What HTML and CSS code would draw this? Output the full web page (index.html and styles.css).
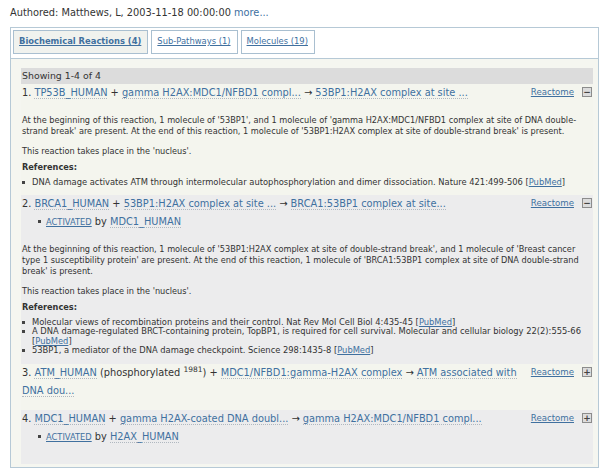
FILE: index.html
```html
<!DOCTYPE html>
<html>
  <head>
    <title>Pathway reactions</title>
    <link rel="stylesheet" href="styles.css">
  </head>
  <body>
    <p class="authored">Authored: Matthews, L, 2003-11-18 00:00:00 <a href="#">more...</a></p>

    <div class="browser">
      <ul class="tabs">
        <li class="tab active"><a href="#">Biochemical Reactions (4)</a></li>
        <li class="tab"><a href="#">Sub-Pathways (1)</a></li>
        <li class="tab"><a href="#">Molecules (19)</a></li>
      </ul>

      <div class="panel">
        <div class="showing">Showing 1-4 of 4</div>

        <div class="reaction light">
          <div class="reaction-head">
            <div class="reaction-title">1. <a class="mol" href="#">TP53B_HUMAN</a> + <a class="mol" href="#">gamma H2AX:MDC1/NFBD1 compl...</a> &rarr; <a class="mol" href="#">53BP1:H2AX complex at site ...</a></div>
            <div class="reaction-tools"><a href="#">Reactome</a><span class="toggle">&minus;</span></div>
          </div>
          <div class="reaction-body">
            <p>At the beginning of this reaction, 1 molecule of '53BP1', and 1 molecule of 'gamma H2AX:MDC1/NFBD1 complex at site of DNA double-strand break' are present. At the end of this reaction, 1 molecule of '53BP1:H2AX complex at site of double-strand break' is present.</p>
            <p class="location">This reaction takes place in the 'nucleus'.</p>
            <h4>References:</h4>
            <ul class="refs">
              <li>DNA damage activates ATM through intermolecular autophosphorylation and dimer dissociation. Nature 421:499-506 [<a href="#">PubMed</a>]</li>
            </ul>
          </div>
        </div>

        <div class="reaction grey">
          <div class="reaction-head">
            <div class="reaction-title">2. <a class="mol" href="#">BRCA1_HUMAN</a> + <a class="mol" href="#">53BP1:H2AX complex at site ...</a> &rarr; <a class="mol" href="#">BRCA1:53BP1 complex at site...</a></div>
            <div class="reaction-tools"><a href="#">Reactome</a><span class="toggle">&minus;</span></div>
          </div>
          <ul class="regulators">
            <li><a class="caps" href="#">Activated</a> by <a class="mol" href="#">MDC1_HUMAN</a></li>
          </ul>
          <div class="reaction-body">
            <p>At the beginning of this reaction, 1 molecule of '53BP1:H2AX complex at site of double-strand break', and 1 molecule of 'Breast cancer type 1 susceptibility protein' are present. At the end of this reaction, 1 molecule of 'BRCA1:53BP1 complex at site of DNA double-strand break' is present.</p>
            <p class="location">This reaction takes place in the 'nucleus'.</p>
            <h4>References:</h4>
            <ul class="refs">
              <li>Molecular views of recombination proteins and their control. Nat Rev Mol Cell Biol 4:435-45 [<a href="#">PubMed</a>]</li>
              <li>A DNA damage-regulated BRCT-containing protein, TopBP1, is required for cell survival. Molecular and cellular biology 22(2):555-66 [<a href="#">PubMed</a>]</li>
              <li>53BP1, a mediator of the DNA damage checkpoint. Science 298:1435-8 [<a href="#">PubMed</a>]</li>
            </ul>
          </div>
        </div>

        <div class="reaction light short">
          <div class="reaction-head">
            <div class="reaction-title">3. <a class="mol" href="#">ATM_HUMAN</a> (phosphorylated <sup>1981</sup>) + <a class="mol" href="#">MDC1/NFBD1:gamma-H2AX complex</a> &rarr; <a class="mol" href="#">ATM associated with DNA dou...</a></div>
            <div class="reaction-tools"><a href="#">Reactome</a><span class="toggle">+</span></div>
          </div>
        </div>

        <div class="reaction grey short">
          <div class="reaction-head">
            <div class="reaction-title">4. <a class="mol" href="#">MDC1_HUMAN</a> + <a class="mol" href="#">gamma H2AX-coated DNA doubl...</a> &rarr; <a class="mol" href="#">gamma H2AX:MDC1/NFBD1 compl...</a></div>
            <div class="reaction-tools"><a href="#">Reactome</a><span class="toggle">+</span></div>
          </div>
          <ul class="regulators">
            <li><a class="caps" href="#">Activated</a> by <a class="mol" href="#">H2AX_HUMAN</a></li>
          </ul>
        </div>
      </div>
    </div>
  </body>
</html>
```

FILE: styles.css
```css
body {
  margin: 0;
  padding: 0 9px 0 10px;
  background: #fff;
  color: #333;
  font-family: 'DejaVu Sans', Verdana, sans-serif;
  font-size: 8.2px;
}

a {
  color: #40709f;
}

.authored {
  margin: 6px 0 0 0;
  font-size: 9.8px;
  line-height: 14px;
}

.authored a {
  text-decoration: none;
}

/* tabs + panel */
.browser {
  margin-top: 7px;
  border: 1px solid #b6c9d6;
}

.tabs {
  display: flex;
  gap: 3px;
  margin: 0;
  padding: 2px 4px 4px 2px;
  list-style: none;
  background: #fff;
  border-bottom: 1px solid #b6c9d6;
}

.tab {
  border: 1px solid #a9bfd0;
  background: #fff;
  padding: 5px 6px 6px 5px;
  font-size: 8.4px;
  line-height: 11px;
}

.tab.active {
  background: #f0f2ee;
}

.tab.active a {
  font-weight: bold;
}

.panel {
  background: #f5f6f0;
  padding: 9px 5px 3px 10px;
}

.showing {
  background: #dcdcdc;
  font-size: 9.4px;
  line-height: 16px;
  padding: 0 1px;
}

/* reactions */
.reaction {
  padding: 0 1px 7px 1px;
}

.reaction.grey {
  padding-bottom: 8px;
}

.reaction.short {
  padding-bottom: 10px;
}

.reaction.light {
  background: #f4f5ee;
}

.reaction.grey {
  background: #ececed;
}

.reaction-head {
  display: flex;
  justify-content: space-between;
  align-items: flex-start;
}

.reaction-title {
  width: 496px;
  font-size: 9.8px;
  line-height: 18px;
}

.reaction-title sup {
  font-size: 7.5px;
  vertical-align: 4px;
  line-height: 0;
}

a.mol {
  text-decoration: none;
  border-bottom: 1px dotted #b0b8c0;
}

.reaction-tools {
  display: flex;
  align-items: center;
  gap: 8px;
  padding-top: 3px;
  font-size: 8.6px;
}

.toggle {
  width: 8px;
  height: 8px;
  border: 1px solid #8c8c8c;
  background: #dcdcdc;
  color: #444;
  font-size: 9px;
  line-height: 8px;
  text-align: center;
  font-weight: bold;
}

.regulators {
  margin: 0;
  padding: 0 0 0 24px;
  font-size: 9.8px;
  line-height: 17px;
  list-style: none;
}

.regulators:last-child {
  margin-bottom: 8px;
}

.regulators li::before,
.refs li::before {
  content: "";
  display: inline-block;
  width: 3px;
  height: 3px;
  background: #444;
  vertical-align: middle;
}

.regulators li::before {
  margin: 0 5px 0 -8px;
}

.refs li::before {
  margin: 0 7px 0 -10px;
}

a.caps {
  text-transform: uppercase;
  font-size: 8.3px;
}

.reaction-body {
  padding-top: 13px;
  line-height: 11px;
}

.reaction-body p {
  margin: 0 0 9px 0;
}

.reaction-body p.location {
  margin-bottom: 5px;
}

.reaction-body h4 {
  margin: 0 0 5px 0;
  font-size: 8.2px;
}

.refs {
  margin: 0;
  padding: 0 0 0 10px;
  font-size: 8.35px;
  line-height: 9.5px;
  list-style: none;
}
```
